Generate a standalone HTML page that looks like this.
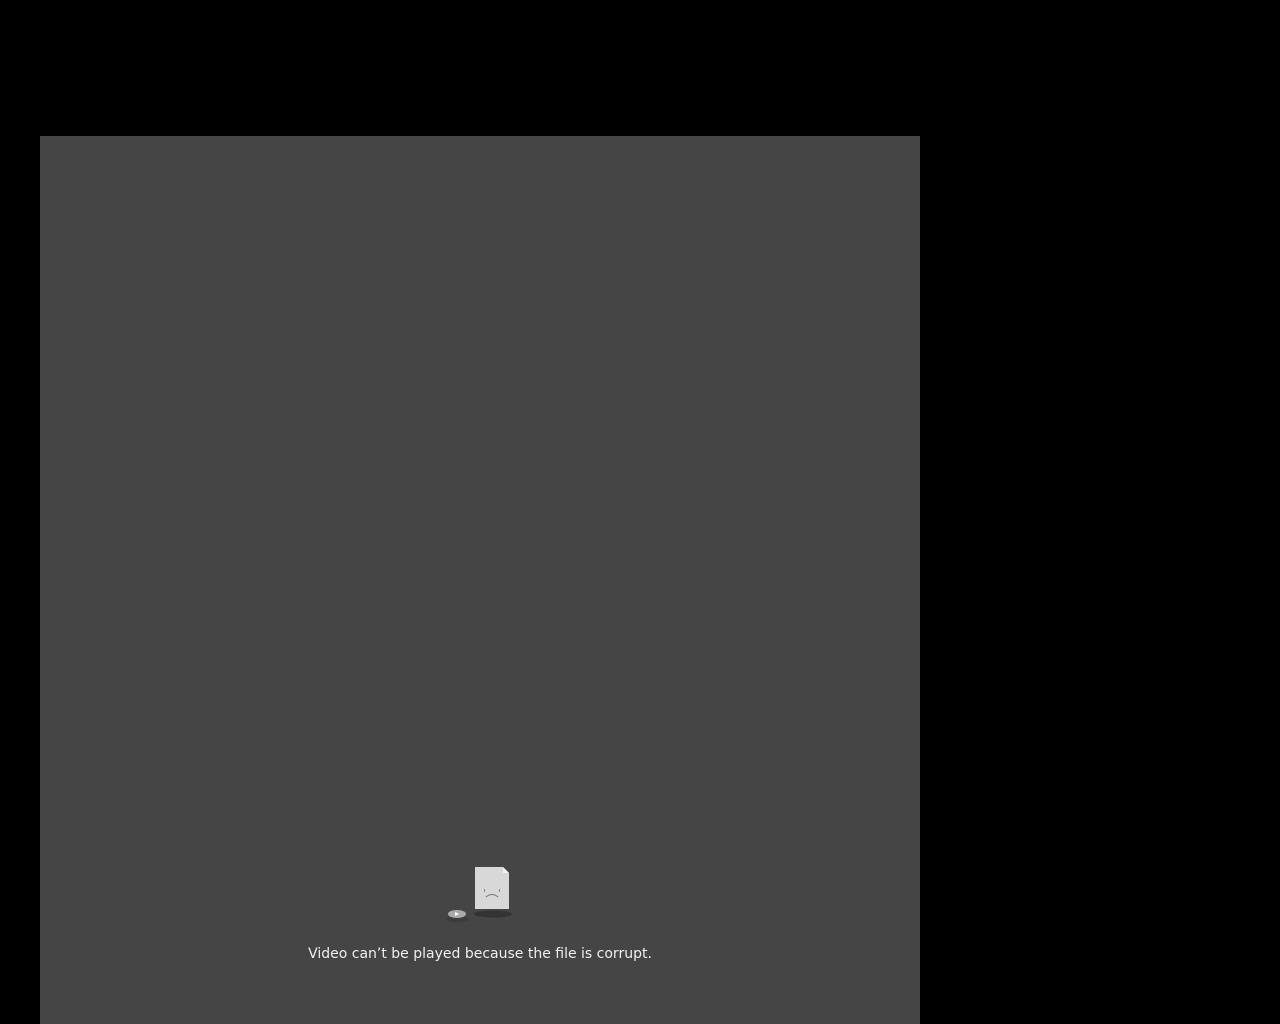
<!DOCTYPE html>
<html><head><style>
html,body{margin:0;background:#000;width:1280px;height:1024px;overflow:hidden}
#v{position:absolute;left:40px;top:136px;width:880px;height:888px;background:#454545}
#t{position:absolute;left:40px;width:880px;top:946px;text-align:center;color:#eee;font:14px "DejaVu Sans",sans-serif}
</style></head><body>
<div id="v"></div>
<svg style="position:absolute;left:440px;top:860px" width="80" height="70">
<ellipse cx="53" cy="54" rx="19" ry="3.5" fill="#333"/>
<ellipse cx="17" cy="59" rx="11" ry="3.5" fill="#3c3c3c"/>
<path d="M35 7h28l6 6v36h-34z" fill="#d8d8d8"/>
<path d="M63 7v6h6z" fill="#f2f2f2"/>
<rect x="44" y="29" width="1" height="3" fill="#888"/><rect x="59" y="29" width="1" height="3" fill="#888"/>
<path d="M46 37q6-5 12 0" stroke="#777" fill="none"/>
<ellipse cx="17" cy="54" rx="9" ry="4" fill="#aaa"/>
<path d="M15 52l4 2-4 2z" fill="#fff"/>
</svg>
<div id="t">Video can’t be played because the file is corrupt.</div>
</body></html>
